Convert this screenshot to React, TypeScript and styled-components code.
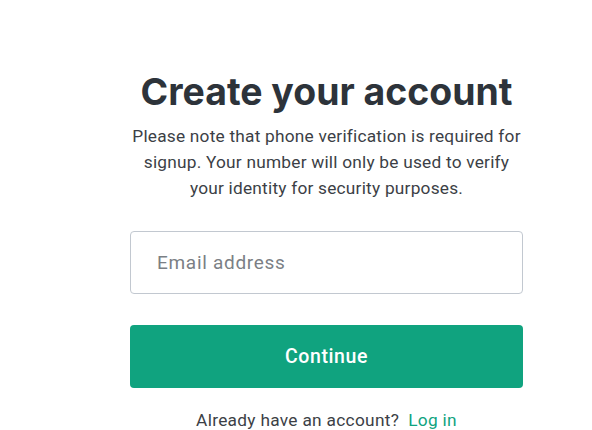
import React from "react";
import styled, { createGlobalStyle } from "styled-components";

const Global = createGlobalStyle`
  html, body { margin: 0; padding: 0; background: #ffffff; }
  body { font-family: Roboto, "Noto Sans", Arial, sans-serif; }
`;

const Page = styled.main`
  width: 592px;
  height: 430px;
  box-sizing: border-box;
  padding: 69px 0 0 130px;
  overflow: hidden;
`;

const Column = styled.section`
  width: 393px;
  display: flex;
  flex-direction: column;
  align-items: center;
`;

const Title = styled.h1`
  margin: 0;
  font-family: Inter, "Noto Sans", Arial, sans-serif;
  font-size: 37.4px;
  line-height: 46px;
  font-weight: 700;
  color: #2d333a;
`;

const Note = styled.p`
  margin: 8px 0 0;
  font-size: 17.3px;
  line-height: 26px;
  letter-spacing: 0.22px;
  color: #3c3f46;
  text-align: center;
  white-space: nowrap;
`;

const Input = styled.input`
  margin-top: 30px;
  width: 100%;
  height: 63px;
  box-sizing: border-box;
  border: 1px solid #c2c8d0;
  border-radius: 4px;
  padding: 0 26px;
  font-family: inherit;
  font-size: 19px;
  letter-spacing: 0.7px;
  color: #2d333a;
  outline: none;
  &::placeholder { color: #7b7f85; }
`;

const Button = styled.button`
  margin-top: 31px;
  width: 100%;
  height: 63px;
  border: none;
  border-radius: 4px;
  background: #10a37f;
  color: #ffffff;
  font-family: inherit;
  font-size: 19.5px;
  letter-spacing: 0.6px;
  font-weight: 500;
`;

const Footer = styled.p`
  margin: 20px 0 0;
  font-size: 17.3px;
  line-height: 24px;
  letter-spacing: 0.3px;
  color: #3c3f46;
`;

const Link = styled.a`
  color: #10a37f;
  text-decoration: none;
  margin-left: 9px;
`;

export default function App() {
  return (
    <>
      <Global />
      <Page>
        <Column>
          <Title>Create your account</Title>
          <Note>
            Please note that phone verification is required for
            <br />
            signup. Your number will only be used to verify
            <br />
            your identity for security purposes.
          </Note>
          <Input placeholder="Email address" />
          <Button>Continue</Button>
          <Footer>
            Already have an account?<Link href="#">Log in</Link>
          </Footer>
        </Column>
      </Page>
    </>
  );
}
